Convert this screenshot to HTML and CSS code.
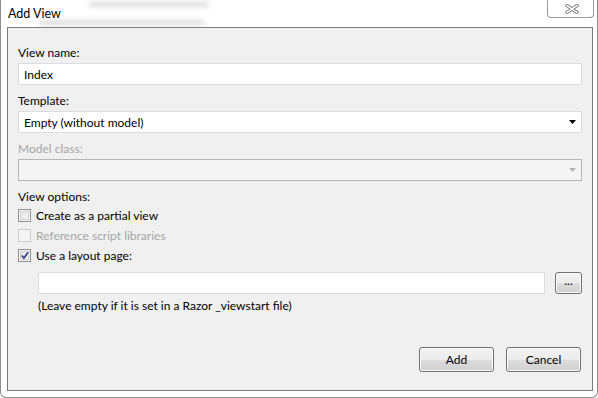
FILE: index.html
```html
<!DOCTYPE html>
<html>
<head>
    <title>Add View</title>
    <link rel="stylesheet" href="styles.css">
</head>
<body>
    <div class="window">
        <div class="titlebar">
            <span class="blur blur-top"></span>
            <span class="blur blur-bottom"></span>
            <span class="title">Add View</span>
            <button class="close-btn" type="button">
                <svg width="14" height="10" viewBox="0 0 14 10">
                    <path d="M2 1.5 L12 8.5 M12 1.5 L2 8.5" stroke="#8c8c8c" stroke-width="3.4" stroke-linecap="square" fill="none"/>
                    <path d="M2 1.5 L12 8.5 M12 1.5 L2 8.5" stroke="#ffffff" stroke-width="1.4" stroke-linecap="square" fill="none"/>
                </svg>
            </button>
        </div>
        <div class="client">
            <form class="view-form">
                <div class="field-label">View name:</div>
                <input class="textbox" type="text" value="Index">

                <div class="field-label">Template:</div>
                <div class="combo">
                    <span class="combo-text">Empty (without model)</span>
                    <svg class="combo-arrow" width="7" height="4" viewBox="0 0 7 4"><path d="M0 0 H7 L3.5 4 Z" fill="#000"/></svg>
                </div>

                <div class="field-label disabled">Model class:</div>
                <div class="combo combo-disabled">
                    <span class="combo-text"></span>
                    <svg class="combo-arrow" width="7" height="4" viewBox="0 0 7 4"><path d="M0 0 H7 L3.5 4 Z" fill="#b4b4b4"/></svg>
                </div>

                <div class="field-label">View options:</div>
                <div class="check-row">
                    <span class="checkbox"></span>
                    <span>Create as a partial view</span>
                </div>
                <div class="check-row disabled">
                    <span class="checkbox checkbox-disabled"></span>
                    <span>Reference script libraries</span>
                </div>
                <div class="check-row">
                    <span class="checkbox">
                        <svg width="11" height="11" viewBox="0 0 11 11"><path d="M2 5.5 L4.3 8.3 L9 1.8" stroke="#2a3f86" stroke-width="1.8" fill="none"/></svg>
                    </span>
                    <span>Use a layout page:</span>
                </div>

                <div class="layout-row">
                    <input class="textbox layout-input" type="text" value="">
                    <button class="win-btn browse-btn" type="button">...</button>
                </div>
                <div class="hint">(Leave empty if it is set in a Razor _viewstart file)</div>

                <div class="actions">
                    <button class="win-btn action-btn" type="button">Add</button>
                    <button class="win-btn action-btn" type="button">Cancel</button>
                </div>
            </form>
        </div>
    </div>
</body>
</html>
```
FILE: styles.css
```css
:root {
    --client-bg: #f0f0f0;
    --frame-grey: #8e8e8e;
    --client-border: #7a7a7a;
    --input-border: #dadde2;
    --disabled-text: #a6a6a6;
}

* {
    margin: 0;
    padding: 0;
    box-sizing: border-box;
    font-family: 'Lato', 'Liberation Sans', sans-serif;
}

body {
    background: #ffffff;
    width: 598px;
    height: 398px;
    overflow: hidden;
}

.window {
    width: 598px;
    height: 398px;
    background: #ffffff;
    border: 1px solid var(--frame-grey);
    border-top: none;
    border-radius: 0 0 6px 6px;
    display: flex;
    flex-direction: column;
}

.titlebar {
    position: relative;
    height: 27px;
    display: flex;
    align-items: flex-start;
    justify-content: space-between;
    padding: 0 3px 0 7px;
}

.title {
    font-size: 12.5px;
    line-height: 16px;
    margin-top: 6px;
    color: #000;
}

/* faint glass blur behind the title */
.blur {
    position: absolute;
    height: 5px;
    background: #c4c4c4;
    border-radius: 3px;
    filter: blur(2.5px);
    opacity: 0.6;
}

.blur-top {
    left: 88px;
    top: 2px;
    width: 120px;
}

.blur-bottom {
    left: 38px;
    top: 20px;
    width: 165px;
}

.close-btn {
    width: 47px;
    height: 18px;
    border: 1px solid #9a9a9a;
    border-top: none;
    border-radius: 0 0 4px 4px;
    background: #ffffff;
    display: flex;
    align-items: center;
    justify-content: center;
    padding-left: 3px;
}

.client {
    margin: 0 4px 6px 6px;
    height: 364px;
    border: 1px solid var(--client-border);
    background: var(--client-bg);
    padding: 17px 10px 0 10px;
}

.view-form {
    display: flex;
    flex-direction: column;
}

.field-label {
    font-size: 12px;
    line-height: 16px;
    color: #000;
    margin-bottom: 2px;
}

.disabled,
.field-label.disabled {
    color: var(--disabled-text);
}

.textbox {
    height: 22px;
    width: 100%;
    border: 1px solid var(--input-border);
    background: #ffffff;
    font-size: 12px;
    padding: 0 5px;
    color: #000;
    outline: none;
    margin-bottom: 8px;
}

.combo {
    height: 22px;
    border: 1px solid var(--input-border);
    background: #ffffff;
    display: flex;
    align-items: center;
    justify-content: space-between;
    padding: 0 5px 0 5px;
    font-size: 12px;
    margin-bottom: 8px;
}

.combo-disabled {
    background: #f4f4f4;
    border-color: #b5b5b5;
}

.check-row {
    display: flex;
    align-items: flex-start;
    gap: 5px;
    height: 20px;
    font-size: 12px;
    line-height: 19px;
}

.view-form .field-label + .check-row {
    margin-top: -1px;
}

.checkbox {
    width: 13px;
    height: 13px;
    margin-top: 3px;
    border: 1px solid #8f8f8f;
    background: linear-gradient(135deg, #dcdcdc, #fbfbfb);
    box-shadow: inset 0 0 0 1px #f4f4f4, inset 0 0 0 2px #d2d2d2;
    display: flex;
    align-items: center;
    justify-content: center;
}

.checkbox svg {
    margin-left: 1px;
}

.checkbox-disabled {
    border-color: #cccccc;
    background: #f4f4f4;
    box-shadow: none;
}

.layout-row {
    display: flex;
    gap: 10px;
    margin: 6px 0 0 20px;
}

.layout-input {
    width: 507px;
    margin-bottom: 0;
}

.win-btn {
    border: 1px solid #707070;
    border-radius: 3px;
    background: linear-gradient(#f3f3f3 0%, #ebebeb 50%, #dddddd 51%, #d0d0d0 100%);
    box-shadow: inset 0 0 0 1px #fbfbfb;
    font-size: 12px;
    color: #000;
}

.browse-btn {
    width: 27px;
    height: 22px;
    line-height: 14px;
    padding-bottom: 4px;
}

.hint {
    margin: 4px 0 0 20px;
    font-size: 12px;
    line-height: 16px;
    color: #000;
}

.actions {
    display: flex;
    justify-content: flex-end;
    gap: 12px;
    margin-top: 33px;
    padding-right: 1px;
}

.action-btn {
    width: 75px;
    height: 25px;
}
```
